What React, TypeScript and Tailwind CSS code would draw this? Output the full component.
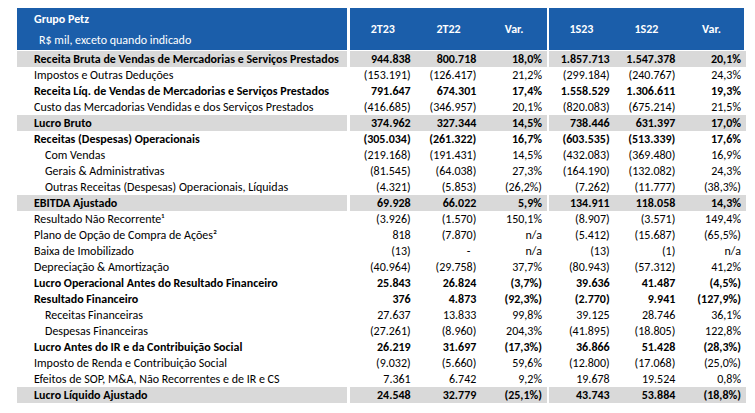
import React from "react";

type Row = {
  label: string;
  v: string[];
  bold?: boolean;
  gray?: boolean;
  indent?: boolean;
};

const rows: Row[] = [
  { label: "Receita Bruta de Vendas de Mercadorias e Serviços Prestados", v: ["944.838", "800.718", "18,0%", "1.857.713", "1.547.378", "20,1%"], bold: true, gray: true },
  { label: "Impostos e Outras Deduções", v: ["(153.191)", "(126.417)", "21,2%", "(299.184)", "(240.767)", "24,3%"] },
  { label: "Receita Líq. de Vendas de Mercadorias e Serviços Prestados", v: ["791.647", "674.301", "17,4%", "1.558.529", "1.306.611", "19,3%"], bold: true },
  { label: "Custo das Mercadorias Vendidas e dos Serviços Prestados", v: ["(416.685)", "(346.957)", "20,1%", "(820.083)", "(675.214)", "21,5%"] },
  { label: "Lucro Bruto", v: ["374.962", "327.344", "14,5%", "738.446", "631.397", "17,0%"], bold: true, gray: true },
  { label: "Receitas (Despesas) Operacionais", v: ["(305.034)", "(261.322)", "16,7%", "(603.535)", "(513.339)", "17,6%"], bold: true },
  { label: "Com Vendas", v: ["(219.168)", "(191.431)", "14,5%", "(432.083)", "(369.480)", "16,9%"], indent: true },
  { label: "Gerais & Administrativas", v: ["(81.545)", "(64.038)", "27,3%", "(164.190)", "(132.082)", "24,3%"], indent: true },
  { label: "Outras Receitas (Despesas) Operacionais, Líquidas", v: ["(4.321)", "(5.853)", "(26,2%)", "(7.262)", "(11.777)", "(38,3%)"], indent: true },
  { label: "EBITDA Ajustado", v: ["69.928", "66.022", "5,9%", "134.911", "118.058", "14,3%"], bold: true, gray: true },
  { label: "Resultado Não Recorrente¹", v: ["(3.926)", "(1.570)", "150,1%", "(8.907)", "(3.571)", "149,4%"] },
  { label: "Plano de Opção de Compra de Ações²", v: ["818", "(7.870)", "n/a", "(5.412)", "(15.687)", "(65,5%)"] },
  { label: "Baixa de Imobilizado", v: ["(13)", "-", "n/a", "(13)", "(1)", "n/a"] },
  { label: "Depreciação & Amortização", v: ["(40.964)", "(29.758)", "37,7%", "(80.943)", "(57.312)", "41,2%"] },
  { label: "Lucro Operacional Antes do Resultado Financeiro", v: ["25.843", "26.824", "(3,7%)", "39.636", "41.487", "(4,5%)"], bold: true },
  { label: "Resultado Financeiro", v: ["376", "4.873", "(92,3%)", "(2.770)", "9.941", "(127,9%)"], bold: true },
  { label: "Receitas Financeiras", v: ["27.637", "13.833", "99,8%", "39.125", "28.746", "36,1%"], indent: true },
  { label: "Despesas Financeiras", v: ["(27.261)", "(8.960)", "204,3%", "(41.895)", "(18.805)", "122,8%"], indent: true },
  { label: "Lucro Antes do IR e da Contribuição Social", v: ["26.219", "31.697", "(17,3%)", "36.866", "51.428", "(28,3%)"], bold: true },
  { label: "Imposto de Renda e Contribuição Social", v: ["(9.032)", "(5.660)", "59,6%", "(12.800)", "(17.068)", "(25,0%)"] },
  { label: "Efeitos de SOP, M&A, Não Recorrentes e de IR e CS", v: ["7.361", "6.742", "9,2%", "19.678", "19.524", "0,8%"] },
  { label: "Lucro Líquido Ajustado", v: ["24.548", "32.779", "(25,1%)", "43.743", "53.884", "(18,8%)"], bold: true, gray: true },
];

function Block({ vals, gray, bold }: { vals: string[]; gray?: boolean; bold?: boolean }) {
  return (
    <div className={`grid w-[197px] grid-cols-3 ${gray ? "bg-[#d9d9d9]" : ""} ${bold ? "font-bold" : ""}`}>
      {vals.map((x, i) => (
        <div key={i} className="pr-[5px] text-right whitespace-nowrap">
          {x === "-" ? <span className="pr-[6px]">-</span> : x}
        </div>
      ))}
    </div>
  );
}

export default function App() {
  return (
    <div
      className="relative h-[413px] w-[755px] overflow-hidden bg-white pl-[17px] pt-[8px] text-[12px] text-black"
      style={{ fontFamily: "Carlito, Calibri, Lato, 'Liberation Sans', sans-serif" }}
    >
      <div className="flex h-[42px] font-bold text-white">
        <div className="flex w-[330px] flex-col bg-[#1b5eaa] pl-[17px]">
          <div className="pt-[3px] leading-[16px]">Grupo Petz</div>
          <div className="pl-[5px] pt-[6px] font-normal leading-[14px]">R$ mil, exceto quando indicado</div>
        </div>
        <div className="ml-[3px] grid w-[197px] grid-cols-3 items-center bg-[#1b5eaa] text-center">
          <div>2T23</div>
          <div>2T22</div>
          <div>Var.</div>
        </div>
        <div className="ml-[2px] grid w-[195px] grid-cols-3 items-center bg-[#1b5eaa] text-center">
          <div>1S23</div>
          <div>1S22</div>
          <div>Var.</div>
        </div>
      </div>
      <div className="mt-[1px] flex flex-col">
        {rows.map((r, i) => (
          <div key={i} className="flex h-[16px] leading-[16px]">
            <div
              className={`w-[330px] whitespace-nowrap ${r.indent ? "pl-[28px]" : "pl-[17px]"} ${r.gray ? "bg-[#d9d9d9]" : ""} ${r.bold ? "font-bold" : ""}`}
            >
              {r.label}
            </div>
            <div className="ml-[3px]">
              <Block vals={r.v.slice(0, 3)} gray={r.gray} bold={r.bold} />
            </div>
            <div className="ml-[2px]">
              <Block vals={r.v.slice(3)} gray={r.gray} bold={r.bold} />
            </div>
          </div>
        ))}
      </div>
    </div>
  );
}
